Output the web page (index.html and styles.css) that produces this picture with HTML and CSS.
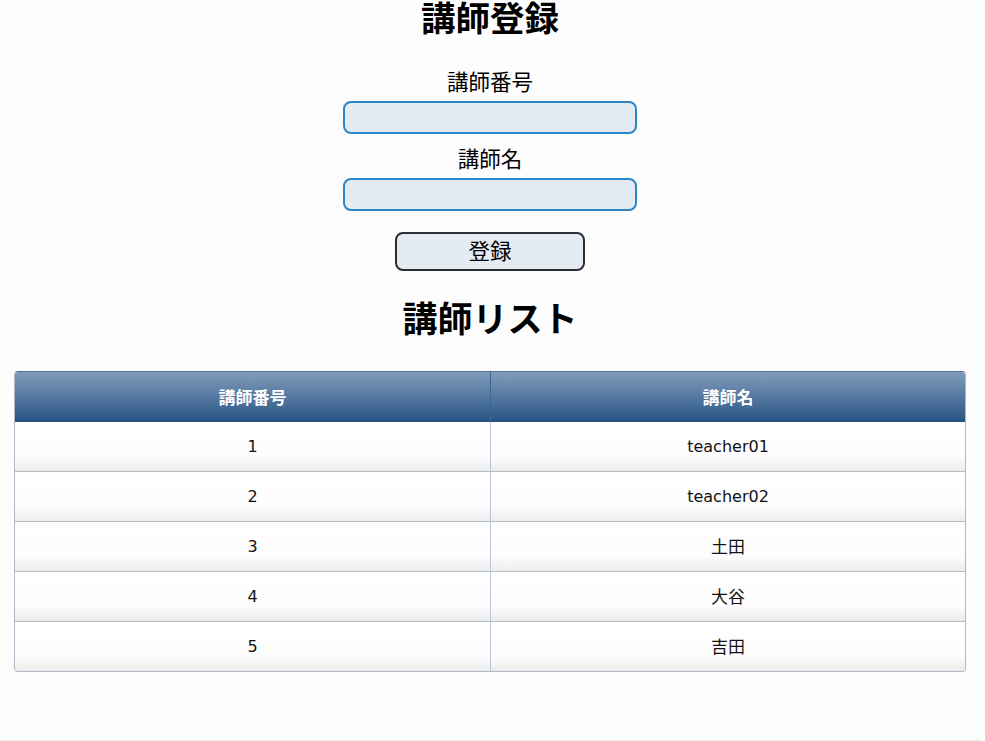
FILE: index.html
```html
<!DOCTYPE html>
<html lang="ja">
<head>
<meta charset="utf-8">
<title>講師登録</title>
<link rel="stylesheet" href="styles.css">
</head>
<body>
<div class="page">
  <h1 class="title">講師登録</h1>
  <form class="form">
    <label class="label" for="tno">講師番号</label>
    <input class="input" id="tno" type="text">
    <label class="label label-2" for="tname">講師名</label>
    <input class="input" id="tname" type="text">
    <button class="btn" type="button">登録</button>
  </form>
  <h2 class="subtitle">講師リスト</h2>
  <table class="list">
    <thead>
      <tr><th>講師番号</th><th>講師名</th></tr>
    </thead>
    <tbody>
      <tr><td>1</td><td>teacher01</td></tr>
      <tr><td>2</td><td>teacher02</td></tr>
      <tr><td>3</td><td class="ja">土田</td></tr>
      <tr><td>4</td><td class="ja">大谷</td></tr>
      <tr><td>5</td><td class="ja">吉田</td></tr>
    </tbody>
  </table>
</div>
</body>
</html>
```

FILE: styles.css
```css
html, body {
  margin: 0;
  padding: 0;
  background: #fdfdfd;
}
body {
  font-family: "Noto Sans CJK JP", "Noto Sans", sans-serif;
  color: #000;
  overflow: hidden;
}
.page {
  width: 980px;
  height: 740px;
  border-bottom: 1px solid #ececec;
  display: flex;
  flex-direction: column;
  align-items: center;
}
.title {
  margin: -4px 0 0;
  font-size: 34.5px;
  line-height: 40px;
  font-weight: 700;
}
.form {
  display: flex;
  flex-direction: column;
  align-items: center;
  margin-top: 31px;
}
.label {
  font-size: 21.5px;
  line-height: 28px;
  margin-bottom: 6px;
}
.label-2 {
  margin-top: 10px;
}
.input {
  box-sizing: border-box;
  width: 294px;
  height: 33px;
  border: 2px solid #2b86c8;
  border-radius: 8px;
  background: #e4ebf2;
  margin: 0;
  outline: none;
}
.btn {
  box-sizing: border-box;
  margin-top: 21px;
  width: 190px;
  height: 39px;
  border: 2px solid #2a2d31;
  border-radius: 8px;
  background: #e4ebf2;
  font-family: inherit;
  font-size: 21.5px;
  line-height: 1;
  color: #000;
  padding: 0 0 3px;
}
.subtitle {
  margin: 24px 0 0;
  font-size: 35px;
  line-height: 44px;
  font-weight: 700;
}
.list {
  margin-top: 32px;
  width: 952px;
  align-self: flex-start;
  margin-left: 14px;
  border-collapse: separate;
  border-spacing: 0;
  table-layout: fixed;
  border: 1px solid #aeb8c6;
  border-top-color: #4d6f95;
  border-radius: 4px;
  overflow: hidden;
}
.list th {
  height: 49px;
  padding: 0;
  font-size: 17px;
  font-weight: 700;
  color: #fff;
  background: linear-gradient(#809cba, #2a5587);
  border-bottom: 1px solid #27507e;
}
.list th + th {
  border-left: 1px solid #3e6591;
}
.list td {
  height: 49px;
  padding: 0;
  text-align: center;
  font-family: "DejaVu Sans", "Noto Sans CJK JP", sans-serif;
  font-size: 16px;
  color: #111;
  background: linear-gradient(#fff 0%, #fdfdfd 70%, #ececec 100%);
  border-bottom: 1px solid #b3bcc8;
}
.list td.ja {
  font-family: "Noto Sans CJK JP", sans-serif;
  font-size: 17px;
  height: 46px;
  padding-bottom: 3px;
}
.list td + td {
  border-left: 1px solid #b8c6d8;
}
.list tr:last-child td {
  border-bottom: none;
}
```
